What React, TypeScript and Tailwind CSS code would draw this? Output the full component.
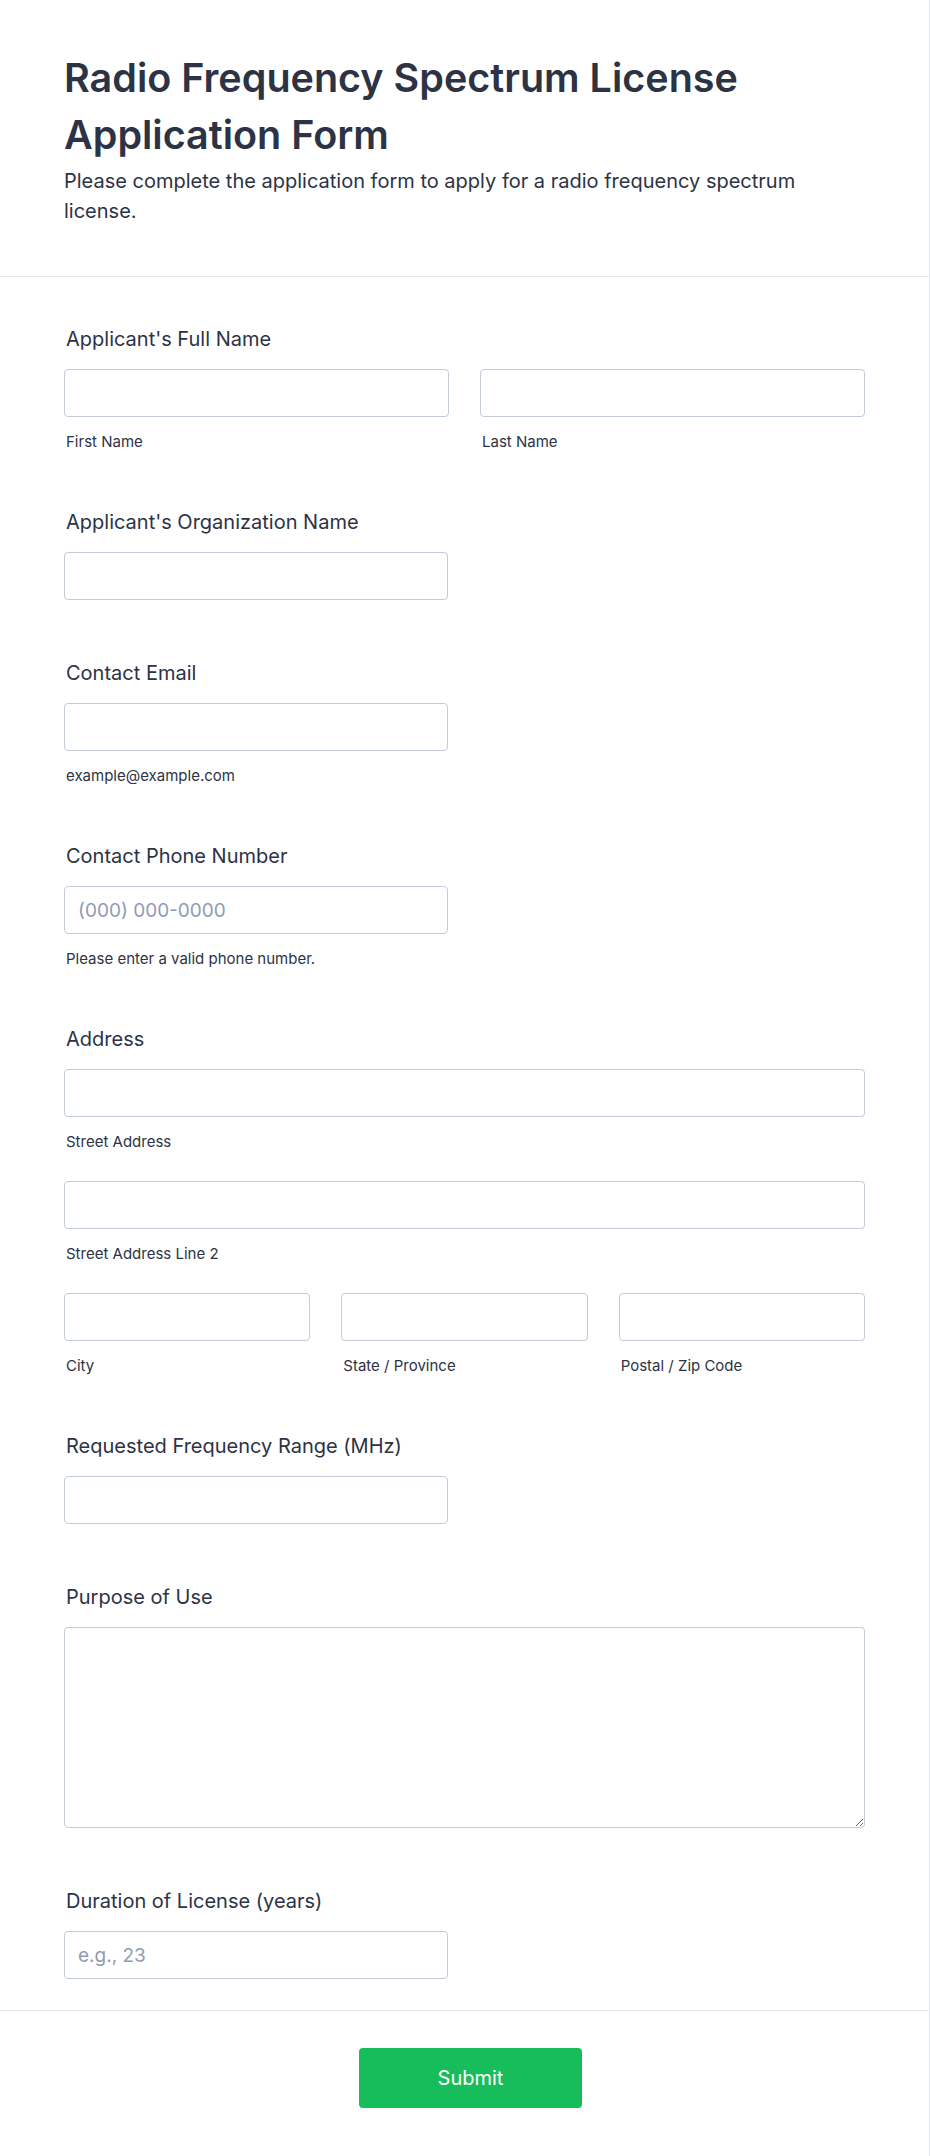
import React from "react";

const font = { fontFamily: "Inter, 'Noto Sans', sans-serif" };

function Label({ children }: { children: React.ReactNode }) {
  return (
    <div className="h-[28px] px-[2px] text-[20px] leading-[28px] font-normal text-[#2c3345]">
      {children}
    </div>
  );
}

function Input({ placeholder, className = "" }: { placeholder?: string; className?: string }) {
  return (
    <input
      type="text"
      placeholder={placeholder}
      className={
        "block h-[48px] rounded-[4px] border border-[#c3cad8] bg-white px-[13px] text-[19px] text-[#2c3345] outline-none placeholder:text-[#8f9bb3] " +
        className
      }
    />
  );
}

function Sub({ children }: { children: React.ReactNode }) {
  return (
    <div className="mt-[14px] h-[22px] px-[2px] text-[15px] leading-[22px] text-[#2c3345]">{children}</div>
  );
}

export default function App() {
  return (
    <div style={font} className="min-h-[2156px] w-[930px] bg-white">
      <div className="border-r border-[#e6e8f0] w-[930px]">
        <div className="px-16 pt-[50px] pb-[50px]">
          <h1 className="text-[39.5px] leading-[57px] font-semibold text-[#2c3345]">
            Radio Frequency Spectrum License Application Form
          </h1>
          <p className="mt-[2px] text-[20px] leading-[30px] text-[#2c3345] pr-10">
            Please complete the application form to apply for a radio frequency spectrum license.
          </p>
        </div>
        <div className="h-px bg-[#e3e5f0]" />
        <div className="px-16 pt-[48px] pb-[31px] flex flex-col">
          <div className="pb-[55px]">
            <Label>Applicant's Full Name</Label>
            <div className="mt-[16px] grid grid-cols-2 gap-x-[31px]">
              <div>
                <Input className="w-full" />
                <Sub>First Name</Sub>
              </div>
              <div>
                <Input className="w-full" />
                <Sub>Last Name</Sub>
              </div>
            </div>
          </div>

          <div className="pb-[59px]">
            <Label>Applicant's Organization Name</Label>
            <Input className="mt-[16px] w-[384px]" />
          </div>

          <div className="pb-[55px]">
            <Label>Contact Email</Label>
            <Input className="mt-[16px] w-[384px]" />
            <Sub>example@example.com</Sub>
          </div>

          <div className="pb-[55px]">
            <Label>Contact Phone Number</Label>
            <Input className="mt-[16px] w-[384px]" placeholder="(000) 000-0000" />
            <Sub>Please enter a valid phone number.</Sub>
          </div>

          <div className="pb-[55px]">
            <Label>Address</Label>
            <Input className="mt-[16px] w-full" />
            <Sub>Street Address</Sub>
            <Input className="mt-[28px] w-full" />
            <Sub>Street Address Line 2</Sub>
            <div className="mt-[28px] grid grid-cols-3 gap-x-[31px]">
              <div>
                <Input className="w-full" />
                <Sub>City</Sub>
              </div>
              <div>
                <Input className="w-full" />
                <Sub>State / Province</Sub>
              </div>
              <div>
                <Input className="w-full" />
                <Sub>Postal / Zip Code</Sub>
              </div>
            </div>
          </div>

          <div className="pb-[59px]">
            <Label>Requested Frequency Range (MHz)</Label>
            <Input className="mt-[16px] w-[384px]" />
          </div>

          <div className="pb-[59px]">
            <Label>Purpose of Use</Label>
            <textarea className="mt-[16px] block h-[201px] w-full rounded-[4px] border border-[#c3cad8] bg-white px-[14px] py-[10px] text-[19px] outline-none" />
          </div>

          <div>
            <Label>Duration of License (years)</Label>
            <Input className="mt-[16px] w-[384px]" placeholder="e.g., 23" />
          </div>
        </div>
        <div className="h-px bg-[#e3e5f0]" />
        <div className="flex justify-center pl-3 pt-[37px] pb-[48px]">
          <button className="h-[60px] w-[223px] rounded-[4px] bg-[#18bd5b] text-[20px] font-normal text-white">
            Submit
          </button>
        </div>
        <div className="h-px bg-[#eef0f5]" />
      </div>
    </div>
  );
}
